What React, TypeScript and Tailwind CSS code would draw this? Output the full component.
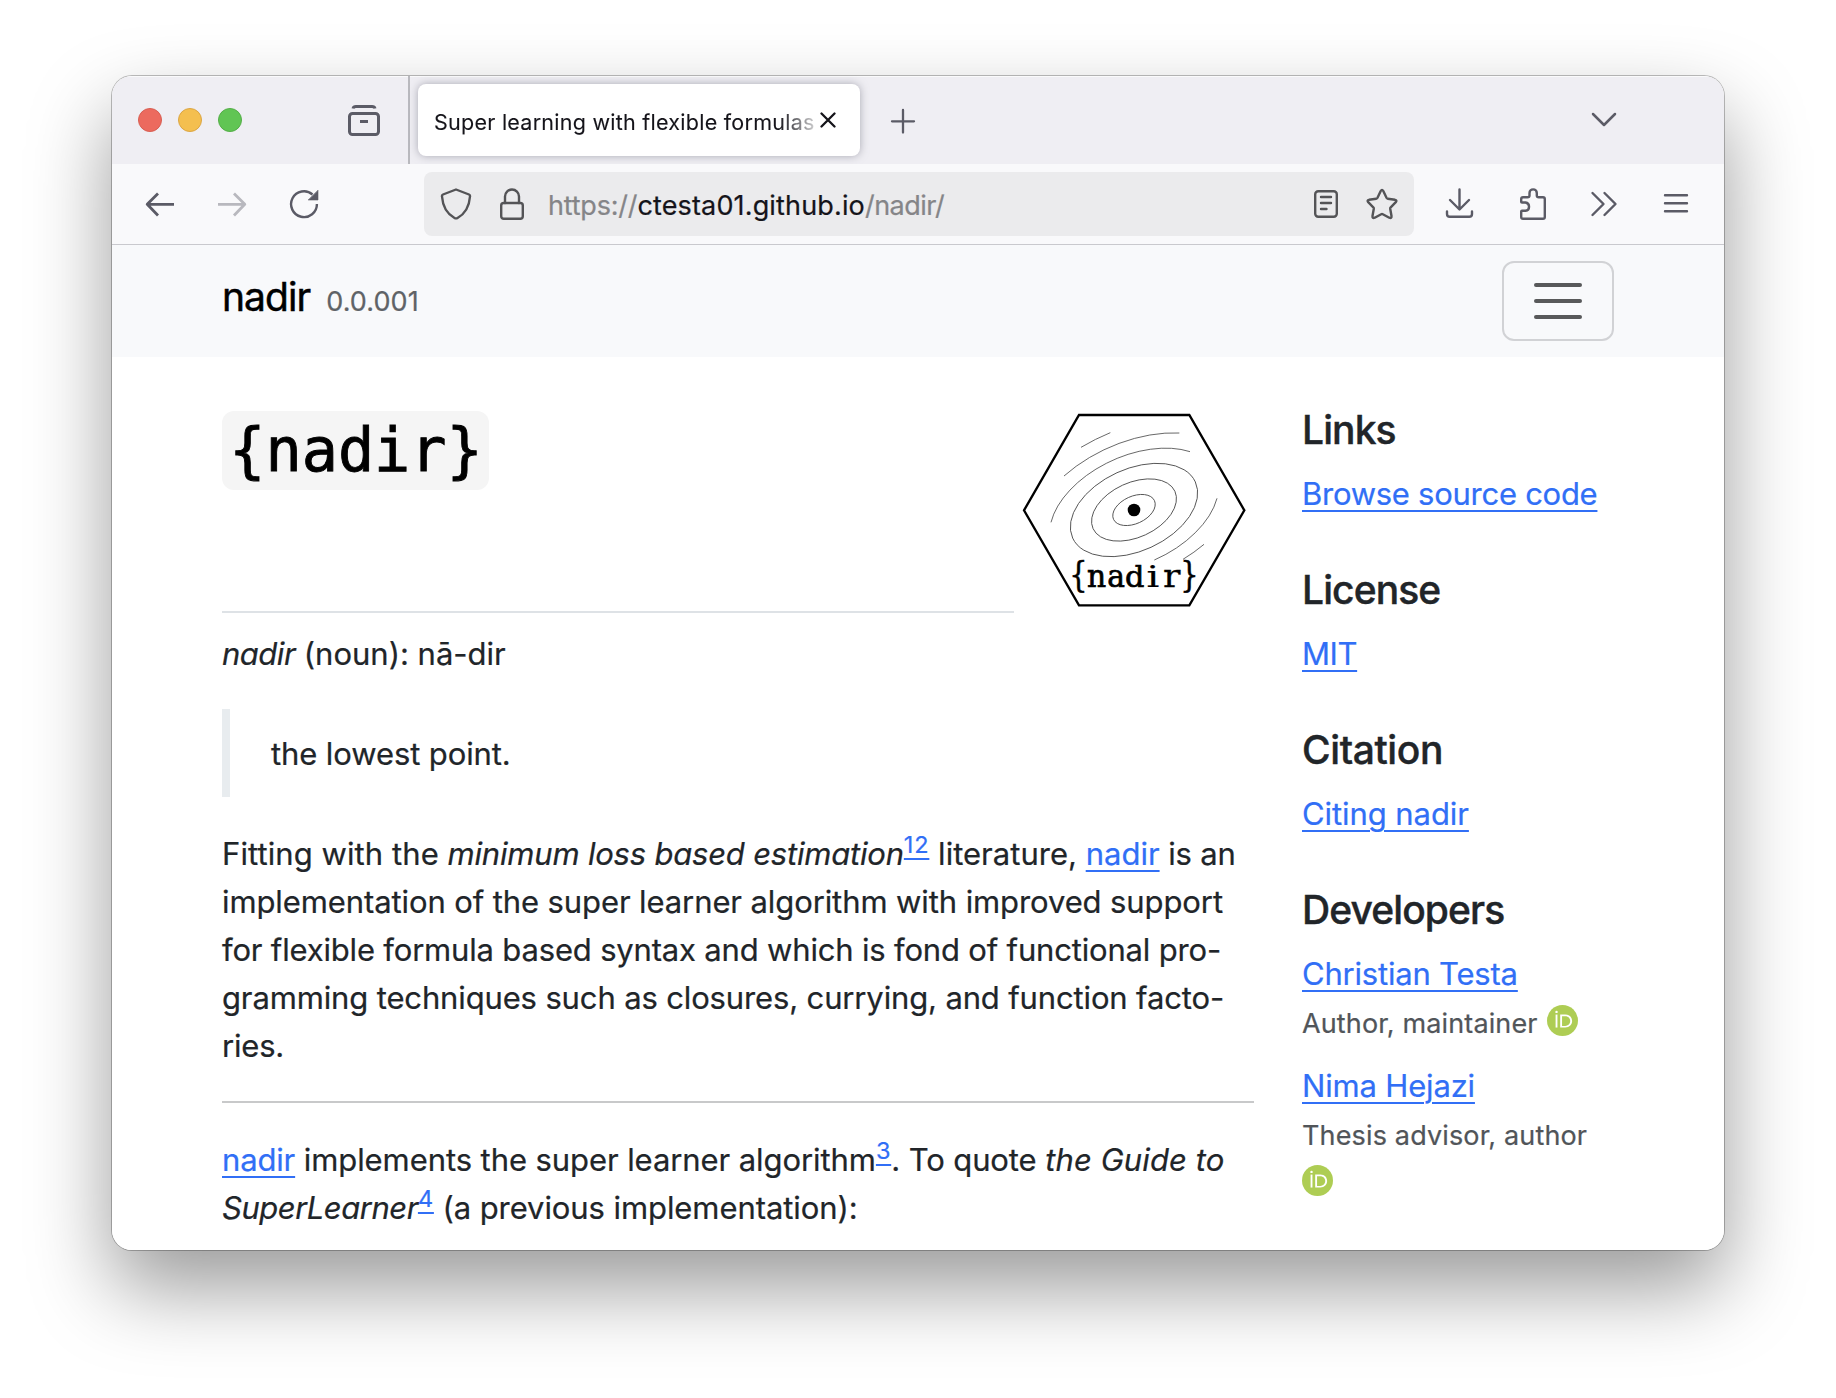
import type { ReactNode } from "react";

function Icon({ children, className = "" }: { children: ReactNode; className?: string }) {
  return (
    <svg
      viewBox="0 0 32 32"
      className={`size-8 shrink-0 ${className}`}
      fill="none"
      stroke="currentColor"
      strokeWidth="2.4"
      strokeLinecap="round"
      strokeLinejoin="round"
    >
      {children}
    </svg>
  );
}

function Orcid({ className = "" }: { className?: string }) {
  return (
    <svg viewBox="0 0 256 256" className={`size-[31px] shrink-0 ${className}`}>
      <circle cx="128" cy="128" r="128" fill="#aecd54" />
      <g fill="#fff">
        <path d="M86.3 186.2H70.9V79.1h15.4v107.1z" />
        <path
          fillRule="evenodd"
          d="M108.9 79.1h41.6c39.6 0 57 28.3 57 53.6 0 27.5-21.5 53.6-56.8 53.6h-41.8V79.1zm15.4 93.3h24.5c34.9 0 42.9-26.5 42.9-39.7 0-21.5-13.7-39.7-43.7-39.7h-23.7v79.4z"
        />
        <circle cx="78.6" cy="56.8" r="10.1" />
      </g>
    </svg>
  );
}

function Link({ children, className = "" }: { children: ReactNode; className?: string }) {
  return (
    <a className={`text-[#316ff6] underline decoration-2 underline-offset-[5px] ${className}`}>{children}</a>
  );
}

function Sup({ children }: { children: ReactNode }) {
  return (
    <Link className="align-[12px] text-[23.5px] leading-none tracking-[0.8px]">{children}</Link>
  );
}

function HexLogo() {
  const glyphs: [string, number, string, number][] = [
    ["{", 235, "scale(0.9 1.12)", 1.5],
    ["n", 289.5, "scale(0.93 1)", 2.2],
    ["a", 348, "scale(0.93 1)", 2.2],
    ["d", 404, "scale(0.95 0.94)", 2.2],
    ["i", 459, "scale(1.25 0.94)", 0.6],
    ["r", 515, "scale(1.14 1)", 0.8],
    ["}", 568, "scale(0.9 1.12)", 1.5],
  ];
  return (
    <svg viewBox="42 63 720 600" className="h-[200px] w-[240px] shrink-0 [-webkit-text-stroke:0]">
      <path d="M237 75H568L733 361L568 646H237L72 361Z" fill="#fff" stroke="#000" strokeWidth="7" />
      <g fill="none" stroke="#505050" strokeWidth="2.6">
        <ellipse cx="402" cy="360" rx="67.5" ry="41" transform="rotate(-24.6 402 360)" />
        <ellipse cx="402" cy="360" rx="135" ry="82" transform="rotate(-24.6 402 360)" />
        <ellipse cx="402" cy="360" rx="202.4" ry="123" transform="rotate(-24.6 402 360)" />
        <path d="M153 397A270 164 -24.6 0 1 570 185" />
        <path d="M651 325A270 164 -24.6 0 1 463 510" />
        <path d="M192 258A337 205 -24.6 0 1 538 129" />
        <path d="M612 463A337 205 -24.6 0 1 549 508" />
        <path d="M243 172A405 246 -24.6 0 1 331 128" />
      </g>
      <circle cx="402" cy="360" r="19" fill="#000" />
      <g fontFamily="'DejaVu Serif', serif" fontSize="96" textAnchor="middle" fill="#000" stroke="#000">
        {glyphs.map(([g, x, scale, stroke]) => (
          <text key={g} transform={`translate(${x} 590) ${scale}`} strokeWidth={stroke}>
            {g}
          </text>
        ))}
      </g>
    </svg>
  );
}

function TabStrip() {
  return (
    <div className="flex h-[88px] shrink-0 items-center bg-[#efeef3] shadow-[inset_0_1px_0_#ffffffb0]">
      <div className="flex gap-4 pl-[26px]">
        <span className="size-6 rounded-full border border-[#d85e52] bg-[#ec6a5e]" />
        <span className="size-6 rounded-full border border-[#dca644] bg-[#f4bf4f]" />
        <span className="size-6 rounded-full border border-[#54ae47] bg-[#61c554]" />
      </div>
      <Icon className="ml-[106px] text-[#5b5b66]">
        <rect x="1.5" y="9.5" width="29" height="21" rx="3" strokeWidth="3" />
        <path d="M5 4.5Q5.5 2.5 8 2.5H24Q26.500 2.5 27 4.500" strokeWidth="3" strokeLinecap="butt" />
        <path d="M12 17.500H20" strokeWidth="3" strokeLinecap="butt" />
      </Icon>
      <div className="ml-7 w-0.5 self-stretch bg-[#b9b9be]" />
      <div className="ml-2 flex h-18 w-[442px] items-center rounded-lg bg-white pl-4 shadow-[0_0_8px_#80808ea0]">
        <span className="w-[382px] overflow-hidden whitespace-nowrap text-[21.5px] leading-[30px] tracking-[0.255px] text-[#15141a] [mask-image:linear-gradient(to_right,#000_345px,transparent_390px)] [-webkit-text-stroke:0.1px]">
          <span className="relative top-0.5">Super learning with flexible formulas</span>
        </span>
        <svg viewBox="0 0 16 16" className="ml-1 size-4 text-[#15141a]" stroke="currentColor" strokeWidth="2.300" strokeLinecap="round">
          <path d="M1.500 1.500L14.500 14.500M14.500 1.500L1.500 14.500" />
        </svg>
      </div>
      <Icon className="ml-[27px] text-[#5b5b66]">
        <path d="M16 6V28.500M5 17.300H27" strokeWidth="2.300" />
      </Icon>
      <Icon className="mr-[104px] ml-auto text-[#5b5b66]">
        <path d="M5 10L16 21L27 10" strokeWidth="2.500" />
      </Icon>
    </div>
  );
}

function Toolbar() {
  return (
    <div className="flex h-[81px] shrink-0 items-center border-b border-[#c9c9ce] bg-[#f9f9fb] px-8 text-[#5b5b66]">
      <Icon>
        <path d="M3 16.300H30M14 5.500L3.200 16.300L14 27.500" strokeWidth="2.800" strokeLinecap="butt" />
      </Icon>
      <Icon className="ml-10 text-[#b8b8be]">
        <path d="M2 16.300H29M18 5.500L28.800 16.300L18 27.500" strokeWidth="2.800" strokeLinecap="butt" />
      </Icon>
      <Icon className="ml-10">
        <path d="M28.900 16A12.900 12.900 0 1 1 24.500 6.500" strokeLinecap="butt" />
        <path d="M30 2.500V12H20.500Z" fill="currentColor" strokeWidth="0.600" />
      </Icon>
      <div className="ml-[104px] flex h-16 w-[990px] items-center rounded-lg bg-[#ebebed] px-4 text-[#545457]">
        <Icon>
          <path d="M16 1.500L29 6.500Q30.200 7 30 8.500C29.300 18 26.500 25 17.500 30Q16 30.800 14.500 30C5.500 25 2.700 18 2 8.500Q1.800 7 3 6.500Z" />
        </Icon>
        <Icon className="ml-6">
          <rect x="5.200" y="15" width="21.600" height="15.800" rx="2.500" />
          <path d="M9 15V8.500A7 7 0 0 1 23 8.500V15" />
        </Icon>
        <div className="relative top-0.5 ml-[20px] whitespace-nowrap text-[27px] leading-8 text-[#858588]">
          <span className="tracking-[-0.2px]">https://</span>
          <span className="tracking-[0.15px] text-[#15141a]">ctesta01.github.io</span>
          <span className="tracking-[-0.5px]">/nadir/</span>
        </div>
        <Icon className="ml-auto">
          <rect x="5.200" y="3.200" width="21.600" height="25.600" rx="3" />
          <path d="M11 9H21M11 15H21M11 21H16.500" />
        </Icon>
        <Icon className="ml-6">
          <path d="M14.700 3Q16 0.800 17.300 3L20.500 9.800Q20.900 10.600 21.800 10.700L29 11.800Q31.300 12.300 29.800 14.200L24.700 19.300Q24.100 19.900 24.200 20.700L25.500 28Q25.700 30.600 23.300 29.700L16.800 26.200Q16 25.800 15.200 26.200L8.700 29.700Q6.300 30.600 6.500 28L7.800 20.700Q7.900 19.900 7.300 19.300L2.200 14.200Q0.700 12.300 3 11.800L10.200 10.700Q11.100 10.600 11.500 9.800Z" />
        </Icon>
      </div>
      <div className="flex flex-1 justify-between pl-[30px]">
        <Icon>
          <path d="M15.500 1.500V21M6 12L15.500 21.500L25 12M3 23.500V26Q3 28.800 5.800 28.800H25.200Q28 28.800 28 26V23.500" />
        </Icon>
        <Icon>
          <path d="M5.200 14V11Q5.200 9.200 7 9.200H11.500Q13.500 9.200 13.500 7.500V5A3.600 3.600 0 0 1 20.800 5V7.500Q20.800 9.200 22.800 9.200H27Q28.800 9.200 28.800 11V29Q28.800 30.800 27 30.800H7Q5.200 30.800 5.200 29V23.500Q5.200 22.800 6 22.800H9.500A4.200 4.200 0 0 0 9.500 14.500H6Q5.200 14.500 5.200 14Z" />
        </Icon>
        <Icon>
          <path d="M4.500 5L15.500 16L4.500 27M16.500 5L27.500 16L16.500 27" />
        </Icon>
        <Icon>
          <path d="M5 7.300H27M5 15.300H27M5 23.300H27" />
        </Icon>
      </div>
    </div>
  );
}

function SiteNav() {
  return (
    <div className="flex h-28 shrink-0 items-start justify-between bg-[#f8f9fb] pr-[110px] pl-[110px]">
      <div className="flex items-baseline whitespace-nowrap pt-[28px]">
        <span className="text-[39px] leading-[48px] tracking-[-0.95px] text-black [-webkit-text-stroke:0.5px]">nadir</span>
        <span className="ml-[16px] text-[27px] tracking-[0.1px] text-[#5f6367]">0.0.001</span>
      </div>
      <div className="mt-4 flex h-20 w-28 flex-col items-center justify-center gap-3 rounded-xl border-2 border-[#d1d2d5]">
        <span className="h-1 w-12 rounded-full bg-[#58595a]" />
        <span className="h-1 w-12 rounded-full bg-[#58595a]" />
        <span className="h-1 w-12 rounded-full bg-[#58595a]" />
      </div>
    </div>
  );
}

function Article() {
  return (
    <main className="w-[1032px] shrink-0 whitespace-nowrap">
      <div className="flex h-[202px] items-start">
        <div className="flex h-full w-[792px] items-start border-b-2 border-[#dee2e6]">
          <code className="flex h-[79px] w-[267px] justify-center rounded-xl bg-[#f5f5f5] pl-px font-['DejaVu_Sans_Mono'] text-[60.2px] leading-[79px] text-black [-webkit-text-stroke:0.9px]">
            {"{nadir}"}
          </code>
        </div>
        <HexLogo />
      </div>
      <p className="mt-[17px]">
        <i className="tracking-[-0.5px]">nadir</i>
        <span> (noun): nā-dir</span>
      </p>
      <blockquote className="mt-[31px] flex h-[88px] items-center border-l-8 border-[#e8ecef] pt-0.5 pl-[41px] tracking-[-0.1px]">
        the lowest point.
      </blockquote>
      <div className="mt-[33px]">
        <p>
          <span className="tracking-[0.08px]">Fitting with the </span>
          <i className="tracking-[-0.2px]">minimum loss based estimation</i>
          <Sup>12</Sup>
          <span className="tracking-[0.02px]"> literature, </span>
          <Link>nadir</Link>
          <span className="tracking-[-0.15px]"> is an</span>
        </p>
        <p className="tracking-[-0.1px]">implementation of the super learner algorithm with improved support</p>
        <p className="tracking-[-0.175px]">for flexible formula based syntax and which is fond of functional pro-</p>
        <p className="tracking-[-0.14px]">gramming techniques such as closures, currying, and function facto-</p>
        <p className="tracking-[-0.2px]">ries.</p>
      </div>
      <hr className="mt-[31px] border-t-2 border-[#c8c9ca]" />
      <div className="mt-[33px]">
        <p>
          <Link className="tracking-[-0.15px]">nadir</Link>
          <span className="tracking-[-0.08px]"> implements the super learner algorithm</span>
          <Sup>3</Sup>
          <span className="tracking-[-0.1px]">. To quote </span>
          <i className="tracking-[0.1px]">the Guide to</i>
        </p>
        <p>
          <i className="tracking-[-0.48px]">SuperLearner</i>
          <Sup>4</Sup>
          <span className="tracking-[-0.08px]"> (a previous implementation):</span>
        </p>
      </div>
    </main>
  );
}

function SideHeading({ children, className = "tracking-[-0.9px]" }: { children: ReactNode; className?: string }) {
  return (
    <h2 className={`mb-[16px] text-[39px] leading-[48px] font-medium [-webkit-text-stroke:0.4px] ${className}`}>
      {children}
    </h2>
  );
}

function Sidebar() {
  return (
    <aside className="ml-12 w-[312px] whitespace-nowrap">
      <section className="-mt-[5px] mb-12">
        <SideHeading>Links</SideHeading>
        <p><Link className="tracking-[-0.27px]">Browse source code</Link></p>
      </section>
      <section className="mb-12">
        <SideHeading>License</SideHeading>
        <p><Link className="tracking-[-0.4px]">MIT</Link></p>
      </section>
      <section className="mb-12">
        <SideHeading className="tracking-[-0.4px]">Citation</SideHeading>
        <p><Link className="tracking-[-0.07px]">Citing nadir</Link></p>
      </section>
      <section>
        <SideHeading>Developers</SideHeading>
        <p><Link className="tracking-[-0.2px]">Christian Testa</Link></p>
        <div className="mt-[5px] mb-[17px] flex items-start gap-[9px] text-[27px] leading-[42px] tracking-[0.13px] text-[#515559]">
          Author, maintainer
          <Orcid className="mt-[2px]" />
        </div>
        <p><Link className="tracking-[-0.17px]">Nima Hejazi</Link></p>
        <div className="mt-[5px] text-[27px] leading-[42px] tracking-[0.15px] text-[#515559]">
          Thesis advisor, author
          <Orcid className="mt-[8px]" />
        </div>
      </section>
    </aside>
  );
}

export default function App() {
  return (
    <div className="h-[1398px] w-[1836px] overflow-hidden bg-white px-28 pt-[76px] font-[Inter,sans-serif] [-webkit-text-stroke:0.22px]">
      <div className="flex h-[1174px] w-[1612px] flex-col overflow-hidden rounded-[20px] bg-white shadow-[0_0_0_1px_#00000040,0_38px_82px_#00000066]">
        <TabStrip />
        <Toolbar />
        <SiteNav />
        <div className="flex flex-1 bg-white pt-[54px] pl-[110px] text-[31px] leading-[48px] text-[#212529]">
          <Article />
          <Sidebar />
        </div>
      </div>
    </div>
  );
}
